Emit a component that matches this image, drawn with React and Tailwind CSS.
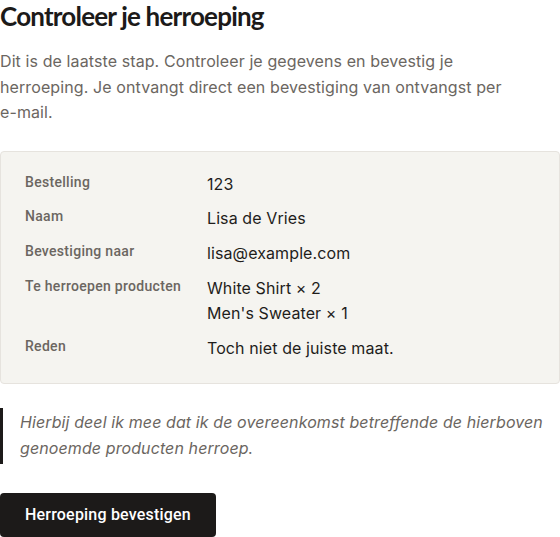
const rows = [
  { label: "Bestelling", values: ["123"] },
  { label: "Naam", values: ["Lisa de Vries"] },
  { label: "Bevestiging naar", values: ["lisa@example.com"] },
  { label: "Te herroepen producten", values: ["White Shirt × 2", "Men's Sweater × 1"] },
  { label: "Reden", values: ["Toch niet de juiste maat."] },
];

export default function App() {
  return (
    <div className="w-[560px] bg-white font-['Inter',sans-serif] text-[#1f1d1b]">
      <h1 className="text-[26px] leading-8 font-bold tracking-[-0.8px] text-[#1c1a19] font-['Lato',sans-serif] mb-[17px]">
        Controleer je herroeping
      </h1>
      <p className="max-w-[520px] text-base leading-[1.6] tracking-[0.1px] text-[#6b6661] mb-[25px]">
        Dit is de laatste stap. Controleer je gegevens en bevestig je herroeping. Je ontvangt direct een bevestiging van ontvangst per{" "}
        <span className="whitespace-nowrap">e-mail.</span>
      </p>

      <div className="rounded border border-[#e6e3de] bg-[#f5f4f0] pl-6 pr-6 pt-5 pb-[22px]">
        <dl className="flex flex-col gap-y-[9px]">
          {rows.map((row) => (
            <div key={row.label} className="flex items-start">
              <dt className="w-[182px] shrink-0 text-sm leading-[21px] tracking-[0.3px] font-medium text-[#6b6661] font-['Roboto',sans-serif]">
                {row.label}
              </dt>
              <dd className="flex flex-col text-base leading-[1.6] tracking-[0.1px] text-[#1f1d1b]">
                {row.values.map((v) => (
                  <span key={v}>{v}</span>
                ))}
              </dd>
            </div>
          ))}
        </dl>
      </div>

      <blockquote className="mt-[24px] border-l-[3px] border-[#1c1a19] pl-[17px] py-[2px] text-base leading-[1.6] tracking-[0.1px] italic text-[#6b6661]">
        Hierbij deel ik mee dat ik de overeenkomst betreffende de hierboven genoemde producten herroep.
      </blockquote>

      <button className="mt-[29px] h-[44px] rounded-[4px] bg-[#1c1a19] px-[25px] text-base tracking-[0.2px] font-medium text-white font-['Roboto',sans-serif]">
        Herroeping bevestigen
      </button>
    </div>
  );
}
